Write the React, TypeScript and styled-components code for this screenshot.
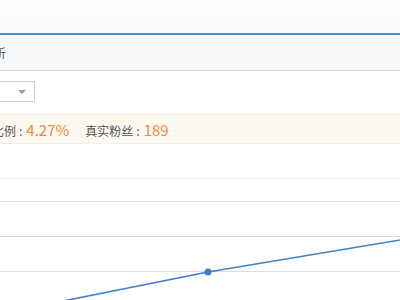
import React from 'react';
import styled, { createGlobalStyle } from 'styled-components';

const GlobalStyle = createGlobalStyle`
  html, body {
    margin: 0;
    padding: 0;
    background: #fff;
    overflow: hidden;
  }
  body {
    font-family: "Noto Sans CJK SC", "Noto Sans", sans-serif;
  }
`;

type Stat = { label: string; value: string };

const stats: Stat[] = [
  { label: '真实粉丝比例', value: '4.27%' },
  { label: '真实粉丝', value: '189' },
];

const grid = [34.5, 57.5, 92.5, 127.5];

export default function App() {
  return (
    <>
      <GlobalStyle />
      <Page>
        <TopSpace />
        <Panel>
          <PanelHeader>粉丝趋势分析</PanelHeader>
          <Toolbar>
            <Select>
              <Caret />
            </Select>
          </Toolbar>
          <StatBar>
            {stats.map((s) => (
              <StatItem key={s.label}>
                <StatLabel>{s.label}</StatLabel>
                <Colon>:</Colon>
                <StatValue>{s.value}</StatValue>
              </StatItem>
            ))}
          </StatBar>
          <Chart width="500" height="160" viewBox="0 0 500 160">
            {grid.map((y, i) => (
              <line
                key={y}
                x1="0"
                x2="500"
                y1={y}
                y2={y}
                stroke={i === 0 ? '#ececec' : '#dcdcdc'}
                strokeWidth="1"
              />
            ))}
            <polyline
              points="90,171.6 308,128 520,92.7"
              fill="none"
              stroke="#3d7fd1"
              strokeWidth="1.6"
            />
            <circle cx="308" cy="128" r="3.5" fill="#3d7fd1" />
          </Chart>
        </Panel>
      </Page>
    </>
  );
}

const Page = styled.div`
  width: 400px;
  height: 300px;
  overflow: hidden;
  background: #fff;
`;

const TopSpace = styled.div`
  height: 33px;
  background: linear-gradient(#ffffff, #fafafa);
`;

const Panel = styled.div`
  margin-left: -100px;
  width: 500px;
  border-top: 2px solid #4f8ccc;
`;

const PanelHeader = styled.div`
  height: 35px;
  line-height: 35px;
  padding-left: 34px;
  background: #f8f9fa;
  border-bottom: 1px solid #e0e0e0;
  font-size: 12px;
  color: #555;
`;

const Toolbar = styled.div`
  padding: 10px 0 12px 58px;
`;

const Select = styled.div`
  box-sizing: border-box;
  width: 77px;
  height: 21px;
  border: 1px solid #cfcfcf;
  background: #fff;
  display: flex;
  align-items: center;
  justify-content: flex-end;
  padding-right: 8px;
`;

const Caret = styled.span`
  width: 0;
  height: 0;
  border-left: 4px solid transparent;
  border-right: 4px solid transparent;
  border-top: 4px solid #999;
`;

const StatBar = styled.div`
  height: 28px;
  display: flex;
  align-items: center;
  gap: 16px;
  padding-left: 44px;
  background: #fdf9f1;
  border-top: 1px solid #f3ede2;
  border-bottom: 1px solid #f3ede2;
`;

const StatItem = styled.div`
  display: flex;
  align-items: baseline;
`;

const StatLabel = styled.span`
  font-size: 12px;
  color: #555;
`;

const Colon = styled.span`
  font-size: 12px;
  color: #555;
  margin: 0 4px 0 3px;
`;

const StatValue = styled.span`
  font-size: 15px;
  color: #ef8a3a;
`;

const Chart = styled.svg`
  display: block;
`;
